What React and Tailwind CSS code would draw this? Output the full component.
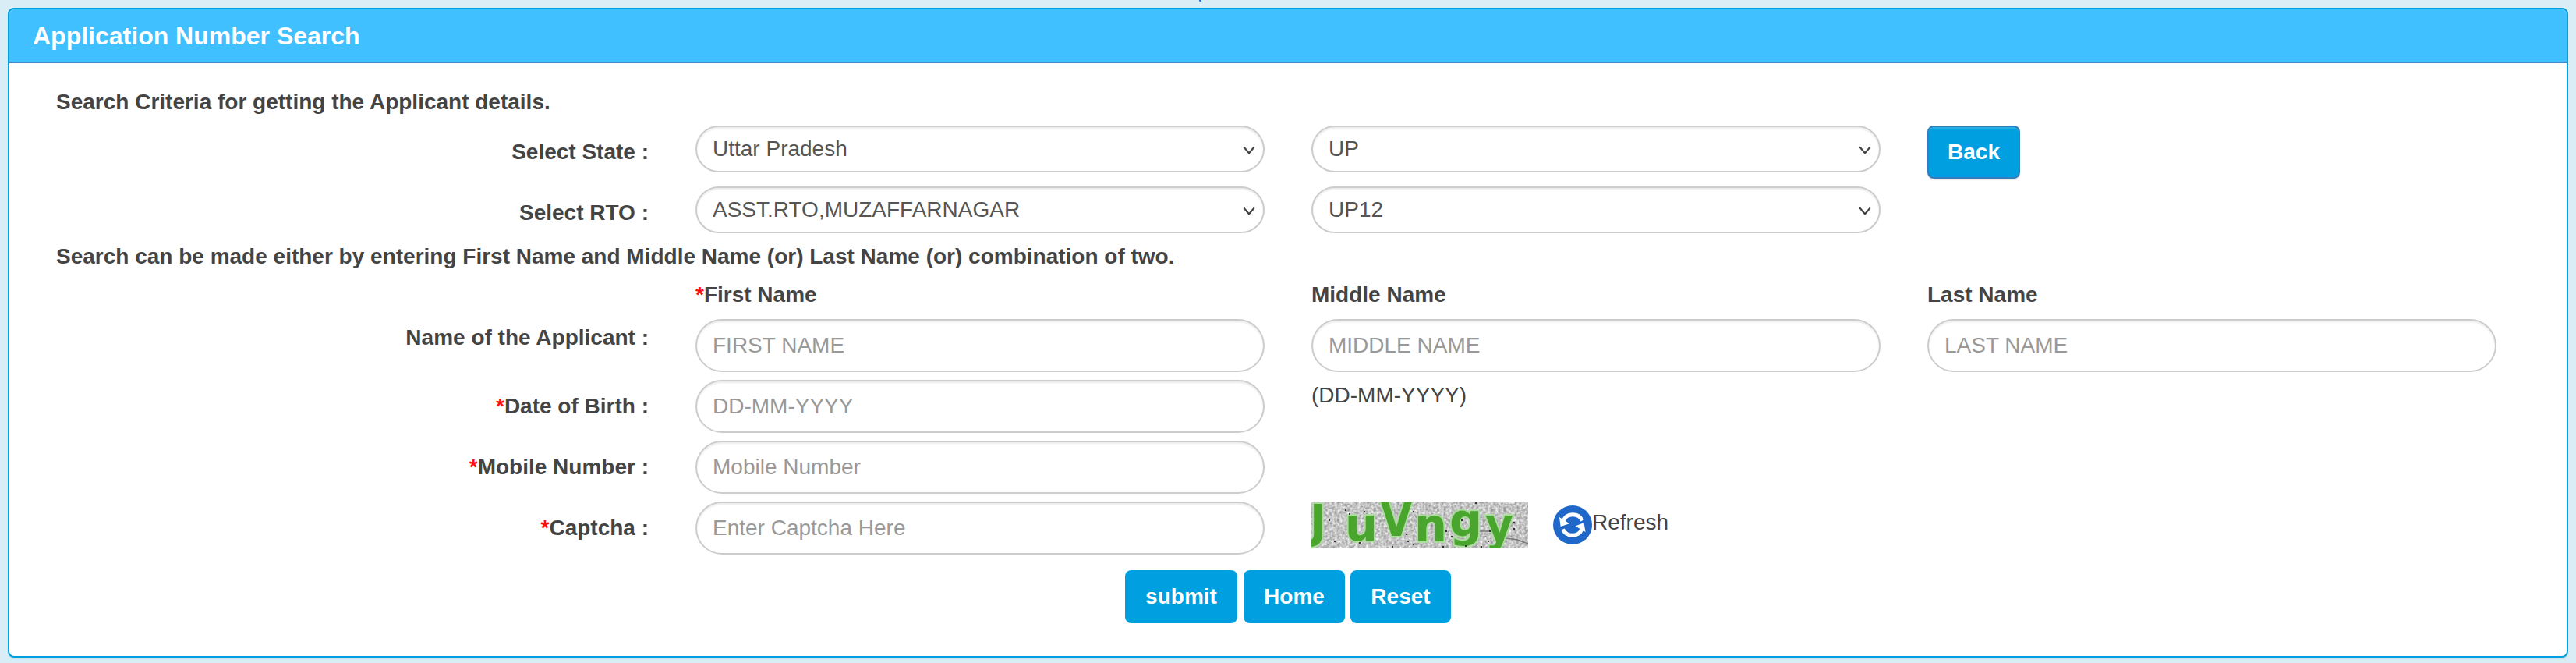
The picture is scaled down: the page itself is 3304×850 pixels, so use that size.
const stateRows = [
  { label: "Select State :", value: "Uttar Pradesh", code: "UP", height: "h-[78px]", back: true },
  { label: "Select RTO :", value: "ASST.RTO,MUZAFFARNAGAR", code: "UP12", height: "h-[70px]" },
];

const captchaLetters = [
  { ch: "J", x: -2, y: 46, w: 21 },
  { ch: "u", x: 43, y: 50, w: 42 },
  { ch: "V", x: 89, y: 44, w: 40 },
  { ch: "n", x: 132, y: 51, w: 42 },
  { ch: "g", x: 177, y: 45, w: 42 },
  { ch: "y", x: 223, y: 51, w: 36 },
];

const captchaDots = [
  [43, 10], [48, 15], [67, 12], [22, 23], [130, 12], [121, 41], [123, 50], [130, 54],
  [29, 50], [103, 57], [61, 52], [172, 37], [179, 44], [210, 1], [259, 26], [259, 34],
  [226, 50], [217, 57], [197, 56], [168, 57], [192, 23], [228, 37],
];

function Label({ children, required }) {
  return (
    <label className="block pr-[60px] pt-[14px] text-right font-bold leading-[40px]">
      {required && <span className="text-[#ff0d0d]">*</span>}
      {children}
    </label>
  );
}

function Select({ value }) {
  return (
    <div className="mr-[60px] flex h-[60px] w-[730px] items-center justify-between rounded-[30px] border-2 border-[#ccc] bg-white pl-5 pr-[10px] text-[#555] shadow-[inset_0_2px_2px_rgba(0,0,0,0.075)]">
      <span className="leading-[40px]">{value}</span>
      <svg className="mt-[3px] h-[12px] w-[16px]" viewBox="0 0 16 12" fill="none" stroke="#444" strokeWidth="2.2" strokeLinecap="round" strokeLinejoin="round">
        <path d="M1.8 2L8 9.2L14.2 2" />
      </svg>
    </div>
  );
}

function Input({ placeholder }) {
  return (
    <input
      placeholder={placeholder}
      className="mr-[60px] h-[68px] w-[730px] rounded-[34px] border-2 border-[#ccc] bg-white px-5 text-[#555] shadow-[inset_0_2px_2px_rgba(0,0,0,0.075)] outline-none placeholder:text-[#999]"
    />
  );
}

function Captcha() {
  return (
    <svg className="h-[60px] w-[278px]" viewBox="0 0 278 60">
      <filter id="grain" x="0" y="0" width="100%" height="100%" colorInterpolationFilters="sRGB">
        <feTurbulence type="fractalNoise" baseFrequency="0.3" numOctaves="2" seed="4" />
        <feColorMatrix values="0.6 0 0 0 0.47  0.6 0 0 0 0.47  0.6 0 0 0 0.47  0 0 0 0 1" />
      </filter>
      <rect width="278" height="60" filter="url(#grain)" />
      <path d="M216 38H230L250 47L264 49L278 54" fill="none" stroke="#777" strokeWidth="1.5" />
      <g fill="#4aa52f" stroke="#addba0" strokeWidth="4" paintOrder="stroke" fontFamily="DejaVu Sans, sans-serif" fontWeight="700" fontSize="58">
        {captchaLetters.map((l) => (
          <text key={l.ch} x={l.x} y={l.y} textLength={l.w} lengthAdjust="spacingAndGlyphs">{l.ch}</text>
        ))}
      </g>
      {captchaDots.map(([x, y]) => (
        <rect key={`${x}-${y}`} x={x} y={y} width="2" height="2" fill="#333" />
      ))}
    </svg>
  );
}

function RefreshIcon() {
  return (
    <svg className="h-[50px] w-[50px]" viewBox="0 0 50 50">
      <circle cx="25" cy="25" r="25" fill="#1f68c9" />
      <g fill="none" stroke="#fff" strokeWidth="5">
        <path d="M13 19.5A13.5 13.5 0 0 1 37.5 19.5" />
        <path d="M37 30.5A13.5 13.5 0 0 1 12.5 30.5" />
      </g>
      <path d="M8 15L9.7 27L21 23.3Z" fill="#fff" />
      <path d="M41.5 34L39.5 22L28.5 26.5Z" fill="#fff" />
    </svg>
  );
}

export default function App() {
  return (
    <div className="relative h-[850px] w-[3304px] overflow-hidden bg-[#d9edf7] px-[10px] pt-[10px] font-['Liberation_Sans',Arial,sans-serif] text-[28px] leading-[40px] text-[#444]">
      {/* tip of the loader above the panel */}
      <div className="absolute left-[1538px] top-0 h-[2px] w-[3px] rounded-b-sm bg-[#1f69cb]" />

      <div className="h-[833px] w-[3284px] rounded-[8px] border-2 border-[#009fe0] bg-white shadow-[0_2px_2px_rgba(0,0,0,0.05)]">
        <div className="flex h-[69px] items-center rounded-t-[6px] border-b-2 border-[#428bca] bg-[#40c0ff] pl-[30px] text-[32px] font-bold text-white">
          Application Number Search
        </div>

        <div className="pl-[60px] pt-[30px]">
          <p className="mb-[10px] font-bold">Search Criteria for getting the Applicant details.</p>

          {stateRows.map((row) => (
            <div key={row.label} className={`grid grid-cols-[820px_790px_790px_790px] items-start ${row.height}`}>
              <Label>{row.label}</Label>
              <Select value={row.value} />
              <Select value={row.code} />
              {row.back && (
                <button className="h-[68px] w-[119px] rounded-[8px] border-2 border-[#357ebd] bg-[#009fe0] font-bold text-white shadow-[inset_0_2px_0_rgba(255,255,255,0.15),0_2px_2px_rgba(0,0,0,0.075)]">
                  Back
                </button>
              )}
            </div>
          ))}

          <p className="mb-[9px] font-bold">
            Search can be made either by entering First Name and Middle Name (or) Last Name (or) combination of two.
          </p>

          <div className="grid h-[51px] grid-cols-[820px_790px_790px_790px] font-bold">
            <span />
            <span><span className="text-[#ff0d0d]">*</span>First Name</span>
            <span>Middle Name</span>
            <span>Last Name</span>
          </div>

          <div className="grid h-[78px] grid-cols-[820px_790px_790px_790px] items-start">
            <div className="-mt-[10px]">
              <Label>Name of the Applicant :</Label>
            </div>
            <Input placeholder="FIRST NAME" />
            <Input placeholder="MIDDLE NAME" />
            <Input placeholder="LAST NAME" />
          </div>

          <div className="grid h-[78px] grid-cols-[820px_790px_790px] items-start">
            <Label required>Date of Birth :</Label>
            <Input placeholder="DD-MM-YYYY" />
            <span>(DD-MM-YYYY)</span>
          </div>

          <div className="grid h-[78px] grid-cols-[820px_790px] items-start">
            <Label required>Mobile Number :</Label>
            <Input placeholder="Mobile Number" />
          </div>

          <div className="grid h-[88px] grid-cols-[820px_790px_790px] items-start">
            <Label required>Captcha :</Label>
            <Input placeholder="Enter Captcha Here" />
            <div className="flex items-start">
              <Captcha />
              <div className="ml-[32px] mt-[5px] flex items-start">
                <RefreshIcon />
                <span className="mt-[2px]">Refresh</span>
              </div>
            </div>
          </div>
        </div>

        <div className="flex gap-2 pl-[1431px] font-bold text-white">
          <button className="h-[68px] w-[144px] rounded-[8px] bg-[#009fe0]">submit</button>
          <button className="h-[68px] w-[130px] rounded-[8px] bg-[#009fe0]">Home</button>
          <button className="-ml-px h-[68px] w-[129px] rounded-[8px] bg-[#009fe0]">Reset</button>
        </div>
      </div>
    </div>
  );
}
